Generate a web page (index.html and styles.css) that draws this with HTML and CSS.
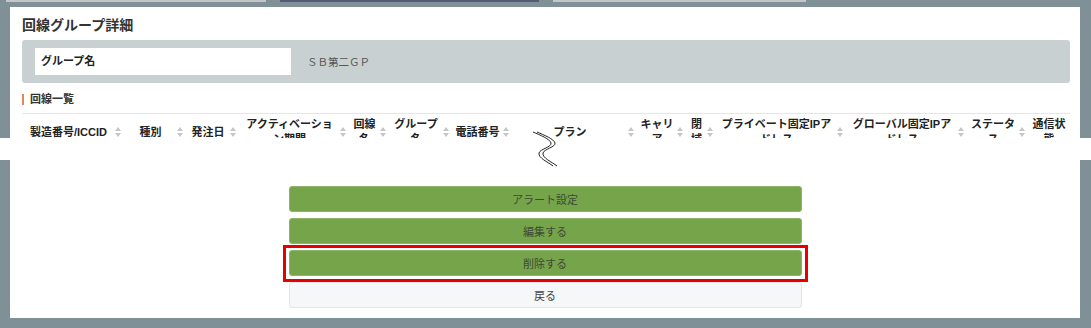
FILE: index.html
```html
<!DOCTYPE html>
<html lang="ja">
<head>
    <meta charset="UTF-8">
    <meta name="viewport" content="width=device-width, initial-scale=1.0">
    <title>回線グループ詳細</title>
    <link rel="stylesheet" href="styles.css">
</head>
<body>
    <div class="page">
        <div class="tabs">
            <span class="tab tab-1"></span>
            <span class="tab tab-2 active"></span>
            <span class="tab tab-3"></span>
        </div>

        <div class="panel panel-top">
            <h2 class="page-title">回線グループ詳細</h2>

            <div class="info-box">
                <div class="info-label">グループ名</div>
                <div class="info-value">ＳＢ第二ＧＰ</div>
            </div>

            <h3 class="section-title">回線一覧</h3>

            <table class="line-table">
                <colgroup>
                    <col style="width:102px"><col style="width:62px"><col style="width:53px">
                    <col style="width:110px"><col style="width:40px"><col style="width:63px">
                    <col style="width:60px"><col style="width:125px"><col style="width:49px">
                    <col style="width:30px"><col style="width:130px"><col style="width:121px">
                    <col style="width:61px"><col style="width:42px">
                </colgroup>
                <thead>
                    <tr>
                        <th class="sortable">製造番号/ICCID</th>
                        <th class="sortable">種別</th>
                        <th class="sortable">発注日</th>
                        <th class="sortable">アクティベーション期間</th>
                        <th class="sortable">回線名</th>
                        <th class="sortable">グループ名</th>
                        <th class="sortable">電話番号</th>
                        <th class="sortable">プラン</th>
                        <th class="sortable">キャリア</th>
                        <th class="sortable">閉域</th>
                        <th class="sortable">プライベート固定IPアドレス</th>
                        <th class="sortable">グローバル固定IPアドレス</th>
                        <th class="sortable">ステータス</th>
                        <th class="last">通信状態</th>
                    </tr>
                </thead>
            </table>
        </div>

        <!-- cut between the two halves of the screen -->
        <div class="break"></div>
        <svg class="break-mark" width="30" height="44" viewBox="0 0 30 44">
            <path d="M1 6 C8 9 18 13 19 17 C20 21 8 23 7 27 C6 32 16 36 21 40" />
            <path d="M5 6 C12 9 22 13 23 17 C24 21 12 23 11 27 C10 32 20 36 25 40" />
        </svg>

        <div class="panel panel-bottom">
            <div class="actions">
                <button class="btn btn-green">アラート設定</button>
                <button class="btn btn-green">編集する</button>
                <div class="highlight">
                    <button class="btn btn-green">削除する</button>
                </div>
                <button class="btn btn-light">戻る</button>
            </div>
        </div>
    </div>
</body>
</html>
```

FILE: styles.css
```css
body {
    margin: 0;
    background-color: #7f9197;
    font-family: "Liberation Sans", "Noto Sans CJK JP", sans-serif;
    color: #333;
}
.page {
    position: relative;
    height: 328px;
    overflow: hidden;
}
.tabs {
    display: flex;
    gap: 14px;
    padding-left: 6px;
    height: 2px;
    margin-bottom: 5px;
}
.tab {
    height: 2px;
    background-color: #c3c7c9;
}
.tab-1 {
    width: 260px;
}
.tab-2 {
    width: 259px;
}
.tab-3 {
    width: 253px;
}
.tab.active {
    background-color: #525b78;
}
.panel {
    background-color: #fff;
    margin: 0 11px 0 10px;
}
.panel-top {
    height: 131px;
    overflow: hidden;
    padding: 8px 10px 0 12px;
    box-sizing: border-box;
}
.page-title {
    margin: 0;
    font-size: 14px;
    line-height: 20px;
    font-weight: bold;
    color: #333;
}
.info-box {
    display: flex;
    align-items: center;
    margin-top: 5px;
    height: 43px;
    box-sizing: border-box;
    padding: 8px 13px;
    background-color: #c8d0d2;
    border-radius: 3px;
}
.info-label {
    width: 256px;
    height: 27px;
    box-sizing: border-box;
    padding-left: 6px;
    line-height: 27px;
    background-color: #fff;
    font-size: 11px;
    font-weight: bold;
    color: #222;
}
.info-value {
    margin-left: 16px;
    font-size: 10.5px;
    color: #555;
}
.section-title {
    display: flex;
    align-items: center;
    margin: 8px 0 0;
    line-height: 16px;
    font-size: 11px;
    font-weight: bold;
    color: #333;
}
.section-title::before {
    content: "";
    width: 2px;
    height: 11px;
    margin-right: 6px;
    background-color: #e8845c;
}
.line-table {
    margin-top: 6px;
    width: 1048px;
    table-layout: fixed;
    border-collapse: collapse;
}
.line-table th {
    position: relative;
    padding: 3px 12px 3px 3px;
    border-top: 1px solid #e6e6e6;
    font-size: 11px;
    line-height: 15px;
    font-weight: bold;
    text-align: center;
    vertical-align: middle;
    color: #222;
}
.line-table th.last {
    padding-right: 3px;
}
.line-table th.sortable::before,
.line-table th.sortable::after {
    content: "";
    position: absolute;
    right: 3px;
    width: 0;
    height: 0;
    border-left: 3px solid transparent;
    border-right: 3px solid transparent;
}
.line-table th.sortable::before {
    top: 50%;
    margin-top: -5px;
    border-bottom: 4px solid #c6c6c6;
}
.line-table th.sortable::after {
    top: 50%;
    margin-top: 1px;
    border-top: 4px solid #c6c6c6;
}
.break {
    height: 22px;
    background-color: #fff;
}
.break-mark {
    position: absolute;
    left: 532px;
    top: 126px;
}
.break-mark path {
    fill: none;
    stroke: #222;
    stroke-width: 1;
}
.panel-bottom {
    height: 158px;
    box-sizing: border-box;
    padding-top: 26px;
}
.actions {
    width: 513px;
    margin: 0 auto;
    display: flex;
    flex-direction: column;
    gap: 6px;
}
.btn {
    width: 100%;
    height: 26px;
    padding: 0;
    border-radius: 3px;
    font-family: "Liberation Sans", "Noto Sans CJK JP", sans-serif;
    font-size: 11px;
    cursor: pointer;
}
.btn-green {
    background-color: #76a44a;
    border: 1px solid #8db46a;
    color: #3d4a36;
}
.btn-light {
    background-color: #f6f7f9;
    border: 1px solid #e2e4e7;
    color: #444;
}
.highlight {
    position: relative;
    display: flex;
}
.highlight::after {
    content: "";
    position: absolute;
    top: -5px;
    bottom: -6px;
    left: -6px;
    right: -6px;
    border: 3px solid #e60000;
    pointer-events: none;
}
```
